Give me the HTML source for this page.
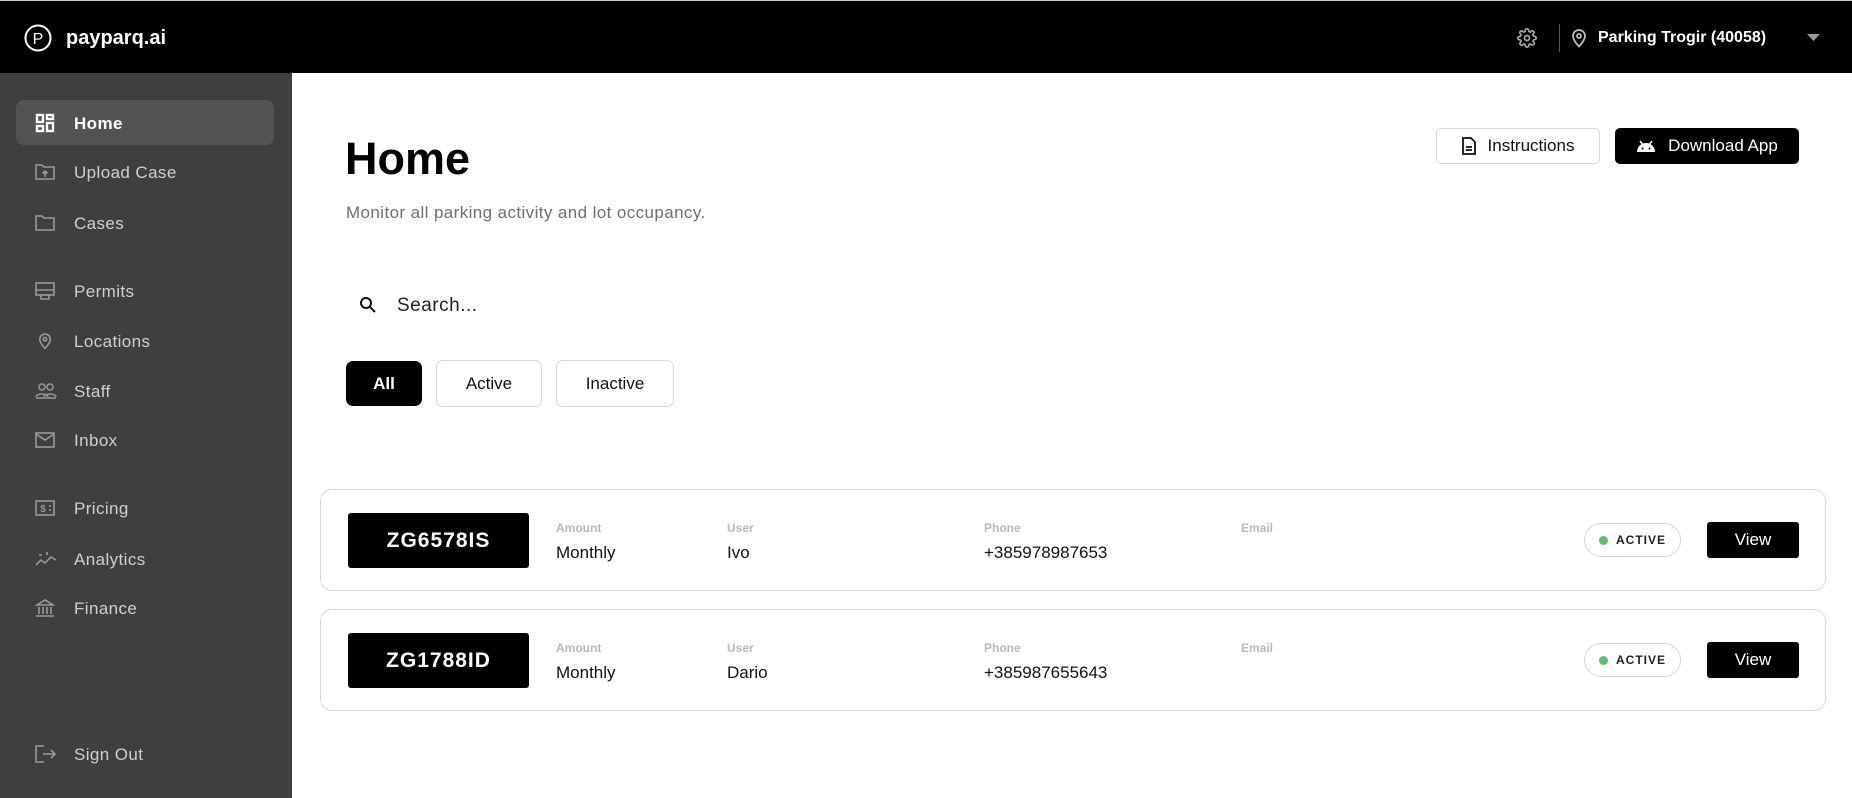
<!DOCTYPE html>
<html><head><meta charset="utf-8">
<style>
*{box-sizing:border-box;margin:0;padding:0}
body{width:1852px;height:798px;overflow:hidden;background:#fff;font-family:"Liberation Sans",sans-serif;position:relative}
.hdr{position:absolute;left:0;top:0;width:1852px;height:73px;background:#000;border-top:1px solid #ccc}
.abs{position:absolute}
.side{position:absolute;left:0;top:73px;width:292px;height:725px;background:#3f3f3f}
.nav{position:absolute;left:74px;font-size:17px;color:#cfcfcf;letter-spacing:.4px;transform:translateY(-50%);margin-top:1px}
.ic{position:absolute;left:35px;transform:translateY(-50%)}
.btn{position:absolute;border:1px solid #d6d6dc;border-radius:5px;display:flex;align-items:center;justify-content:center;font-size:17px;color:#111}
.card{position:absolute;left:320px;width:1506px;height:102px;border:1px solid #d8d8d8;border-radius:12px}
.plate{position:absolute;left:27px;top:23px;width:181px;height:55px;background:#000;border-radius:3px;color:#fff;font-weight:bold;font-size:21px;display:flex;align-items:center;justify-content:center;letter-spacing:1px}
.lbl{position:absolute;top:31px;font-size:12px;font-weight:bold;color:#b8b8b8}
.val{position:absolute;top:53px;font-size:17px;color:#111}
.badge{position:absolute;left:1263px;top:33px;width:97px;height:34px;border:1px solid #d6d6d6;border-radius:17px;font-size:12px;font-weight:bold;letter-spacing:1px;color:#222;display:flex;align-items:center;justify-content:center;gap:8px}
.badge i{width:9px;height:9px;border-radius:50%;background:#5fbf6a;display:inline-block}
.view{position:absolute;left:1386px;top:32px;width:92px;height:36px;background:#000;border-radius:3px;color:#fff;font-size:17px;display:flex;align-items:center;justify-content:center}
</style></head><body>
<div class="hdr">
 <svg class="abs" style="left:24px;top:23px" width="28" height="28" viewBox="0 0 28 28"><circle cx="14" cy="14" r="12.5" fill="none" stroke="#fff" stroke-width="2"/><text x="14" y="20" text-anchor="middle" font-family="Liberation Sans" font-size="16" fill="#fff">P</text></svg>
 <div class="abs" style="left:66px;top:26px;color:#fff;font-weight:bold;font-size:20px">payparq.ai</div>
 <svg class="abs" style="left:1517px;top:27px" width="20" height="20" viewBox="0 0 24 24" fill="none" stroke="#aaa" stroke-width="2"><circle cx="12" cy="12" r="3"/><path d="M19.4 15a1.7 1.7 0 0 0 .3 1.8l.1.1a2 2 0 1 1-2.8 2.8l-.1-.1a1.7 1.7 0 0 0-1.8-.3 1.7 1.7 0 0 0-1 1.5V21a2 2 0 1 1-4 0v-.1a1.7 1.7 0 0 0-1.1-1.5 1.7 1.7 0 0 0-1.8.3l-.1.1a2 2 0 1 1-2.8-2.8l.1-.1a1.7 1.7 0 0 0 .3-1.8 1.7 1.7 0 0 0-1.5-1H3a2 2 0 1 1 0-4h.1a1.7 1.7 0 0 0 1.5-1.1 1.7 1.7 0 0 0-.3-1.8l-.1-.1a2 2 0 1 1 2.8-2.8l.1.1a1.7 1.7 0 0 0 1.8.3H9a1.7 1.7 0 0 0 1-1.5V3a2 2 0 1 1 4 0v.1a1.7 1.7 0 0 0 1 1.5 1.7 1.7 0 0 0 1.8-.3l.1-.1a2 2 0 1 1 2.8 2.8l-.1.1a1.7 1.7 0 0 0-.3 1.8V9a1.7 1.7 0 0 0 1.5 1H21a2 2 0 1 1 0 4h-.1a1.7 1.7 0 0 0-1.5 1z"/></svg>
 <div class="abs" style="left:1559px;top:23px;width:1px;height:28px;background:#555"></div>
 <svg class="abs" style="left:1571px;top:27px" width="16" height="20" viewBox="0 0 16 20" fill="none" stroke="#bbb" stroke-width="1.8"><path d="M8 18.5s-6-6-6-10.5a6 6 0 0 1 12 0c0 4.5-6 10.5-6 10.5z"/><circle cx="8" cy="8" r="2"/></svg>
 <div class="abs" style="left:1598px;top:28px;color:#fff;font-weight:bold;font-size:16px">Parking Trogir (40058)</div>
 <svg class="abs" style="left:1807px;top:33px" width="13" height="8"><path d="M0 0h13L6.5 7z" fill="#999"/></svg>
</div>
<div class="side">
 <div class="abs" style="left:16px;top:27px;width:258px;height:45px;background:#525252;border-radius:8px"></div>
</div>
<svg class="ic" style="top:123px" width="20" height="20" viewBox="0 0 20 20" fill="none" stroke="#fff" stroke-width="2.4"><rect x="2" y="2" width="6" height="7"/><rect x="12" y="2" width="6" height="4"/><rect x="2" y="13" width="6" height="5"/><rect x="12" y="10" width="6" height="8"/></svg>
<div class="nav" style="top:123px;color:#fff;font-weight:bold">Home</div>
<svg class="ic" style="top:172px" width="20" height="18" viewBox="0 0 20 18" fill="none" stroke="#999" stroke-width="1.6"><path d="M1 2h6l2 2h10v12H1z"/><path d="M10 14V8M7.5 10.5L10 8l2.5 2.5"/></svg>
<div class="nav" style="top:172px">Upload Case</div>
<svg class="ic" style="top:223px" width="20" height="18" viewBox="0 0 20 18" fill="none" stroke="#999" stroke-width="1.6"><path d="M1 2h6l2 2h10v12H1z"/></svg>
<div class="nav" style="top:223px">Cases</div>
<svg class="ic" style="top:291px" width="20" height="20" viewBox="0 0 20 20" fill="none" stroke="#999" stroke-width="1.6"><rect x="1" y="2" width="18" height="12"/><path d="M1 9h18M6 14v4h8v-4"/></svg>
<div class="nav" style="top:291px">Permits</div>
<svg class="ic" style="top:341px;left:38px" width="14" height="19" viewBox="0 0 16 20" fill="none" stroke="#999" stroke-width="1.8"><path d="M8 18.5s-6-6-6-10.5a6 6 0 0 1 12 0c0 4.5-6 10.5-6 10.5z"/><circle cx="8" cy="8" r="2"/></svg>
<div class="nav" style="top:341px">Locations</div>
<svg class="ic" style="top:391px" width="22" height="16" viewBox="0 0 22 16" fill="none" stroke="#999" stroke-width="1.5"><circle cx="7" cy="4" r="3"/><circle cx="15" cy="4" r="3"/><path d="M1 14c0-4 12-4 12 0M9 14c0-4 12-4 12 0M1 15h20"/></svg>
<div class="nav" style="top:391px">Staff</div>
<svg class="ic" style="top:440px" width="20" height="16" viewBox="0 0 20 16" fill="none" stroke="#999" stroke-width="1.6"><rect x="1" y="1" width="18" height="14"/><path d="M1 2l9 6 9-6"/></svg>
<div class="nav" style="top:440px">Inbox</div>
<svg class="ic" style="top:508px" width="20" height="16" viewBox="0 0 20 16" fill="none" stroke="#999" stroke-width="1.6"><rect x="1" y="1" width="18" height="14"/><text x="8" y="12" font-size="10" fill="#999" stroke="none" text-anchor="middle" font-family="Liberation Sans" font-weight="bold">$</text><path d="M14 6h2M14 10h2"/></svg>
<div class="nav" style="top:508px">Pricing</div>
<svg class="ic" style="top:559px" width="22" height="16" viewBox="0 0 22 16" fill="none" stroke="#999" stroke-width="1.6"><path d="M1 14l5-5 4 3 6-6 5 3"/><path d="M4 4h3M12 1v3"/></svg>
<div class="nav" style="top:559px">Analytics</div>
<svg class="ic" style="top:608px" width="20" height="20" viewBox="0 0 20 20" fill="none" stroke="#999" stroke-width="1.6"><path d="M2 7L10 2l8 5zM4 9v7M8 9v7M12 9v7M16 9v7M1 18h18"/></svg>
<div class="nav" style="top:608px">Finance</div>
<svg class="ic" style="top:754px" width="22" height="18" viewBox="0 0 22 18" fill="none" stroke="#999" stroke-width="1.6"><path d="M9 1H1v16h8M8 9h12M16 5l4 4-4 4"/></svg>
<div class="nav" style="top:754px">Sign Out</div>

<div class="abs" style="left:345px;top:133px;font-size:45px;font-weight:bold;color:#000">Home</div>
<div class="abs" style="left:346px;top:203px;font-size:17px;color:#6f6f6f;letter-spacing:.4px">Monitor all parking activity and lot occupancy.</div>

<div class="btn" style="left:1436px;top:128px;width:164px;height:36px;gap:12px"><svg width="14" height="18" viewBox="0 0 14 18" fill="none" stroke="#111" stroke-width="1.8"><path d="M1 1h8l4 4v12H1z"/><path d="M4 10h6M4 13h6"/></svg>Instructions</div>
<div class="btn" style="left:1615px;top:128px;width:184px;height:36px;background:#000;border-color:#000;color:#fff;gap:12px"><svg width="20" height="12" viewBox="0 0 20 12"><path d="M1 12a9 9 0 0 1 18 0z" fill="#fff"/><path d="M4 1l3 4M16 1l-3 4" stroke="#fff" stroke-width="1.5"/><circle cx="6.5" cy="8.5" r="1" fill="#000"/><circle cx="13.5" cy="8.5" r="1" fill="#000"/></svg>Download App</div>

<svg class="abs" style="left:359px;top:296px" width="18" height="18" viewBox="0 0 18 18" fill="none" stroke="#111" stroke-width="2"><circle cx="7" cy="7" r="5"/><path d="M11 11l5 5"/></svg>
<div class="abs" style="left:397px;top:295px;font-size:19px;color:#222;letter-spacing:.5px">Search...</div>

<div class="btn" style="left:346px;top:361px;width:76px;height:45px;background:#000;border-color:#000;color:#fff;font-weight:bold;border-radius:7px">All</div>
<div class="btn" style="left:436px;top:360px;width:106px;height:47px;border-radius:7px">Active</div>
<div class="btn" style="left:556px;top:360px;width:118px;height:47px;border-radius:7px">Inactive</div>

<div class="card" style="top:489px">
 <div class="plate">ZG6578IS</div>
 <div class="lbl" style="left:235px">Amount</div><div class="val" style="left:235px">Monthly</div>
 <div class="lbl" style="left:406px">User</div><div class="val" style="left:406px">Ivo</div>
 <div class="lbl" style="left:663px">Phone</div><div class="val" style="left:663px">+385978987653</div>
 <div class="lbl" style="left:920px">Email</div>
 <div class="badge"><i></i>ACTIVE</div>
 <div class="view">View</div>
</div>
<div class="card" style="top:609px">
 <div class="plate">ZG1788ID</div>
 <div class="lbl" style="left:235px">Amount</div><div class="val" style="left:235px">Monthly</div>
 <div class="lbl" style="left:406px">User</div><div class="val" style="left:406px">Dario</div>
 <div class="lbl" style="left:663px">Phone</div><div class="val" style="left:663px">+385987655643</div>
 <div class="lbl" style="left:920px">Email</div>
 <div class="badge"><i></i>ACTIVE</div>
 <div class="view">View</div>
</div>
</body></html>
